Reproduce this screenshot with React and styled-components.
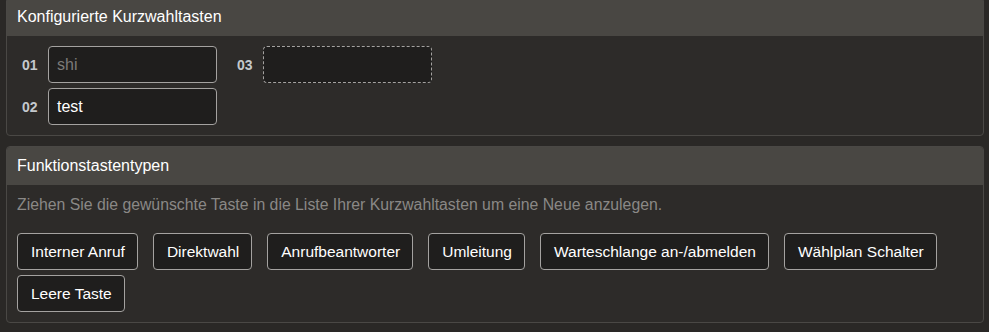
import React from 'react';
import styled, { createGlobalStyle } from 'styled-components';

const GlobalStyle = createGlobalStyle`
  html, body {
    margin: 0;
    padding: 0;
    background: #2a2826;
    font-family: Arial, "Liberation Sans", sans-serif;
    color: #ffffff;
  }
`;

const Page = styled.div`
  display: flex;
  flex-direction: column;
  gap: 10px;
  padding: 0 5px 0 6px;
  margin-top: -3px;
`;

const Panel = styled.section`
  background: #2d2b29;
  border: 1px solid #4a4845;
  border-radius: 4px;
  overflow: hidden;
`;

const PanelHeader = styled.div`
  height: 38px;
  background: #494743;
  display: flex;
  align-items: center;
  padding: 0 10px;
  font-size: 16px;
  color: #ffffff;
`;

const PanelBody = styled.div`
  padding: 10px 15px 10px 10px;
`;

const SlotGrid = styled.div`
  display: grid;
  grid-template-columns: repeat(2, max-content);
  grid-auto-flow: column;
  grid-template-rows: repeat(2, 37px);
  column-gap: 20px;
  row-gap: 5px;
  padding-left: 5px;
`;

const Slot = styled.div`
  display: flex;
  align-items: center;
`;

const SlotLabel = styled.span`
  width: 26px;
  font-size: 14px;
  font-weight: bold;
  color: #c4c8cc;
`;

const SlotBox = styled.div`
  box-sizing: border-box;
  width: 169px;
  height: 37px;
  background: #1f1e1d;
  border: 1px ${p => (p.$empty ? 'dashed' : 'solid')} #a4a2a0;
  border-radius: 4px;
  padding: 0 8px;
  display: flex;
  align-items: center;
  font-size: 16px;
  color: ${p => (p.$muted ? '#7c7a78' : '#ffffff')};
`;

const Hint = styled.p`
  margin: 0;
  padding: 1px 0 0;
  font-size: 15.8px;
  line-height: 18px;
  color: #8a8886;
`;

const KeyList = styled.div`
  display: flex;
  flex-wrap: wrap;
  gap: 5px 15px;
  margin-top: 19px;
`;

const KeyButton = styled.button`
  box-sizing: border-box;
  height: 37px;
  padding: 0 12px 0 13px;
  background: #1f1e1d;
  border: 1px solid #a4a2a0;
  border-radius: 4px;
  font-family: Arial, "Liberation Sans", sans-serif;
  font-size: 15.5px;
  color: #ffffff;
  cursor: grab;
`;

const slots = [
  { id: '01', text: 'shi', muted: true },
  { id: '02', text: 'test' },
  { id: '03', text: '', empty: true },
];

const keyTypes = [
  'Interner Anruf',
  'Direktwahl',
  'Anrufbeantworter',
  'Umleitung',
  'Warteschlange an-/abmelden',
  'Wählplan Schalter',
  'Leere Taste',
];

export default function App() {
  return (
    <>
      <GlobalStyle />
      <Page>
        <Panel>
          <PanelHeader>Konfigurierte Kurzwahltasten</PanelHeader>
          <PanelBody>
            <SlotGrid>
              {slots.map(s => (
                <Slot key={s.id}>
                  <SlotLabel>{s.id}</SlotLabel>
                  <SlotBox $muted={s.muted} $empty={s.empty}>{s.text}</SlotBox>
                </Slot>
              ))}
            </SlotGrid>
          </PanelBody>
        </Panel>
        <Panel>
          <PanelHeader>Funktionstastentypen</PanelHeader>
          <PanelBody>
            <Hint>Ziehen Sie die gewünschte Taste in die Liste Ihrer Kurzwahltasten um eine Neue anzulegen.</Hint>
            <KeyList>
              {keyTypes.map(k => (
                <KeyButton key={k}>{k}</KeyButton>
              ))}
            </KeyList>
          </PanelBody>
        </Panel>
      </Page>
    </>
  );
}
